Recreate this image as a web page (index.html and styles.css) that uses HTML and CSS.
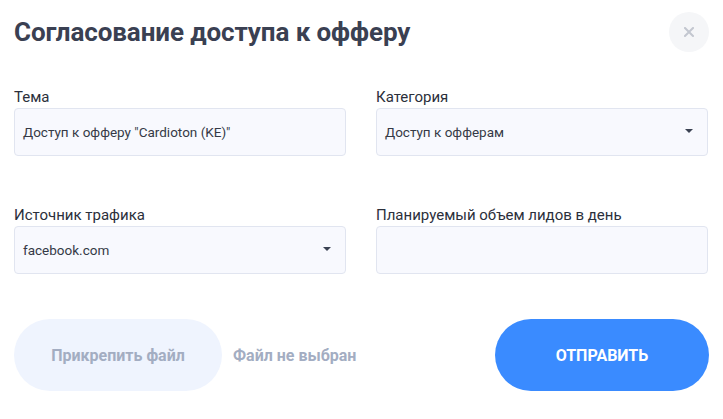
FILE: index.html
```html
<!DOCTYPE html>
<html lang="ru">
<head>
<meta charset="utf-8">
<link rel="stylesheet" href="styles.css">
</head>
<body>
<div class="modal">
  <div class="header">
    <h1 class="title">Согласование доступа к офферу</h1>
    <button class="close" aria-label="Закрыть">
      <svg width="10" height="10" viewBox="0 0 10 10"><path d="M1 1L9 9M9 1L1 9" stroke="#c3c7d0" stroke-width="2" stroke-linecap="square"/></svg>
    </button>
  </div>
  <div class="grid">
    <div class="field">
      <label class="label">Тема</label>
      <div class="input">Доступ к офферу "Cardioton (KE)"</div>
    </div>
    <div class="field">
      <label class="label">Категория</label>
      <div class="input select">Доступ к офферам<span class="caret"></span></div>
    </div>
    <div class="field">
      <label class="label">Источник трафика</label>
      <div class="input select">facebook.com<span class="caret"></span></div>
    </div>
    <div class="field">
      <label class="label">Планируемый объем лидов в день</label>
      <div class="input"></div>
    </div>
  </div>
  <div class="footer">
    <div class="file">
      <button class="attach">Прикрепить файл</button>
      <span class="file-name">Файл не выбран</span>
    </div>
    <button class="submit">ОТПРАВИТЬ</button>
  </div>
</div>
</body>
</html>
```
FILE: styles.css
```css
* { box-sizing: border-box; }
body {
  margin: 0;
  background: #fff;
  font-family: Roboto, "Noto Sans", sans-serif;
  color: #2b2f3b;
}
.modal {
  padding: 12px 15px 0 14px;
}
.header {
  display: flex;
  justify-content: space-between;
  align-items: center;
  height: 40px;
}
.title {
  margin: 0;
  font-size: 26px;
  font-weight: 700;
  color: #3a4052;
  letter-spacing: -0.1px;
}
.close {
  width: 40px;
  height: 40px;
  border-radius: 50%;
  border: none;
  background: #f5f6f8;
  display: flex;
  align-items: center;
  justify-content: center;
  padding: 0;
  margin-right: -1px;
}
.grid {
  margin-top: 36px;
  display: grid;
  grid-template-columns: 1fr 1fr;
  column-gap: 30px;
  row-gap: 50px;
}
.field {
  display: flex;
  flex-direction: column;
}
.label {
  font-size: 15px;
  line-height: 18px;
  color: #2b2f3b;
  margin-bottom: 2px;
}
.input {
  height: 48px;
  background: #f8f9fe;
  border: 1px solid #e1e5f0;
  border-radius: 4px;
  padding: 0 8px;
  display: flex;
  align-items: center;
  font-size: 13.5px;
  color: #353a46;
}
.select {
  justify-content: space-between;
  padding-right: 14px;
}
.caret {
  width: 0;
  height: 0;
  border-left: 4px solid transparent;
  border-right: 4px solid transparent;
  border-top: 4px solid #3b4252;
  margin-top: -2px;
}
.footer {
  margin-top: 45px;
  display: flex;
  justify-content: space-between;
  align-items: center;
}
.file {
  display: flex;
  align-items: center;
  gap: 11px;
}
.attach {
  width: 208px;
  height: 72px;
  border-radius: 36px;
  border: none;
  background: #eff4fe;
  font-family: inherit;
  font-size: 16px;
  font-weight: 700;
  color: #a3adc2;
}
.file-name {
  font-size: 16px;
  font-weight: 700;
  color: #a3adc2;
}
.submit {
  width: 214px;
  height: 72px;
  border-radius: 36px;
  border: none;
  background: #3a8bff;
  font-family: inherit;
  font-size: 16px;
  font-weight: 700;
  color: #fff;
  margin-right: -1px;
}
```
